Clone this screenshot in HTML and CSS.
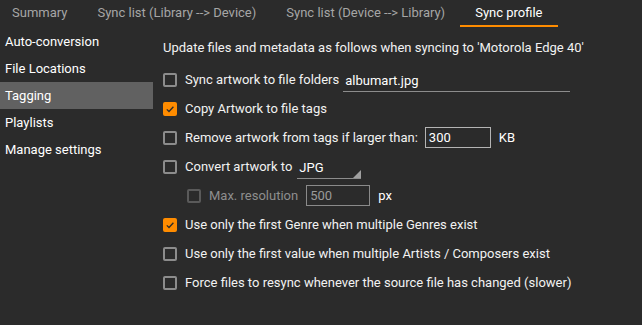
FILE: index.html
```html
<!DOCTYPE html>
<html>
<head>
    <title>Sync profile</title>
    <link rel="stylesheet" href="styles.css">
</head>
<body>
    <div class="tabs">
        <div class="tab first">Summary</div>
        <div class="tab">Sync list (Library --&gt; Device)</div>
        <div class="tab">Sync list (Device --&gt; Library)</div>
        <div class="tab active">Sync profile</div>
    </div>

    <div class="main">
        <div class="sidebar">
            <div class="nav-item">Auto-conversion</div>
            <div class="nav-item">File Locations</div>
            <div class="nav-item selected">Tagging</div>
            <div class="nav-item">Playlists</div>
            <div class="nav-item">Manage settings</div>
        </div>

        <div class="content">
            <div class="heading">Update files and metadata as follows when syncing to 'Motorola Edge 40'</div>

            <div class="row">
                <span class="box"></span>
                <span class="label">Sync artwork to file folders</span>
                <span class="line-input folder">albumart.jpg</span>
            </div>

            <div class="row">
                <span class="box checked"><svg viewBox="0 0 14 14"><path d="M3.8 7.4 L6 9.5 L10.4 4.8"/></svg></span>
                <span class="label">Copy Artwork to file tags</span>
            </div>

            <div class="row">
                <span class="box"></span>
                <span class="label">Remove artwork from tags if larger than:</span>
                <span class="text-input size">300</span>
                <span class="unit">KB</span>
            </div>

            <div class="row">
                <span class="box"></span>
                <span class="label">Convert artwork to</span>
                <span class="line-input combo">JPG<span class="corner"></span></span>
            </div>

            <div class="row sub">
                <span class="box disabled"></span>
                <span class="label muted">Max. resolution</span>
                <span class="text-input res">500</span>
                <span class="unit">px</span>
            </div>

            <div class="row">
                <span class="box checked"><svg viewBox="0 0 14 14"><path d="M3.8 7.4 L6 9.5 L10.4 4.8"/></svg></span>
                <span class="label">Use only the first Genre when multiple Genres exist</span>
            </div>

            <div class="row">
                <span class="box"></span>
                <span class="label">Use only the first value when multiple Artists / Composers exist</span>
            </div>

            <div class="row">
                <span class="box"></span>
                <span class="label">Force files to resync whenever the source file has changed (slower)</span>
            </div>
        </div>
    </div>
</body>
</html>
```

FILE: styles.css
```css
body {
    margin: 0;
    background-color: #2b2b2b;
    color: #f2f2f2;
    font-family: Roboto, "Liberation Sans", sans-serif;
    font-size: 13px;
    line-height: 16px;
    width: 642px;
    height: 325px;
    overflow: hidden;
}

.tabs {
    display: flex;
    height: 28px;
}

.tab {
    padding: 5px 15px 0 15px;
    height: 20px;
    color: #a6a6a6;
    border-bottom: 2px solid transparent;
    white-space: nowrap;
}

.tab.first {
    margin-left: -3px;
}

.tab.active {
    color: #ffffff;
    border-bottom-color: #ff8c00;
}

.main {
    display: flex;
}

.sidebar {
    width: 153px;
    flex-shrink: 0;
}

.nav-item {
    height: 27px;
    line-height: 27px;
    padding-left: 5px;
    color: #ffffff;
}

.nav-item.selected {
    background-color: #616161;
}

.content {
    padding: 12px 0 0 10px;
    flex: 1;
}

.heading {
    margin-bottom: 9px;
}

.row {
    display: flex;
    align-items: center;
    height: 29px;
}

.row.sub {
    padding-left: 24px;
}

.box {
    width: 10px;
    height: 10px;
    border: 2px solid #8c8c8c;
    border-radius: 2px;
    margin-right: 8px;
    flex-shrink: 0;
    position: relative;
}

.box.checked {
    background-color: #ff8c00;
    border-color: #ff8c00;
}

.box.checked svg {
    position: absolute;
    left: -2px;
    top: -2px;
    width: 14px;
    height: 14px;
}

.box.checked path {
    fill: none;
    stroke: #2b2b2b;
    stroke-width: 1.3;
}

.box.disabled {
    border-color: #5a5a5a;
}

.muted {
    color: #8e8e8e;
}

.line-input {
    border-bottom: 1px solid #8c8c8c;
    padding: 2px;
    color: #ffffff;
    position: relative;
}

.line-input.folder {
    margin-left: 4px;
    width: 223px;
    margin-top: 3px;
}

.line-input.combo {
    margin-left: 5px;
    width: 60px;
    margin-top: 3px;
}

.corner {
    position: absolute;
    right: 0;
    bottom: 0;
    width: 0;
    height: 0;
    border-left: 8px solid transparent;
    border-bottom: 8px solid #a0a0a0;
}

.text-input {
    border: 1px solid #b4b4b4;
    height: 19px;
    line-height: 19px;
    padding-left: 3px;
    color: #ffffff;
}

.text-input.size {
    margin-left: 7px;
    width: 61px;
}

.text-input.res {
    margin-left: 8px;
    width: 59px;
    color: #9a9a9a;
    border-color: #8a8a8a;
}

.unit {
    margin-left: 8px;
    color: #ffffff;
}
```
